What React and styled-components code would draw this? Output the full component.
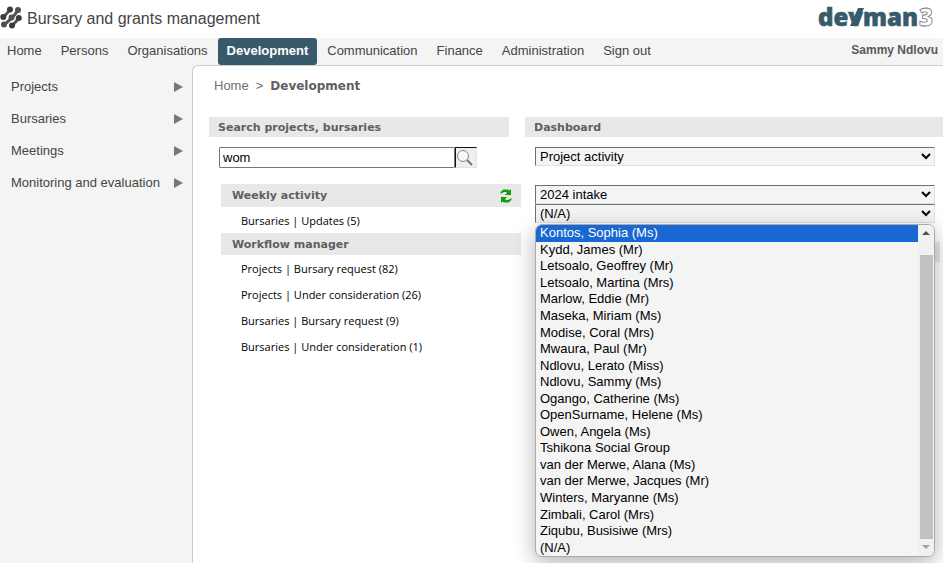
import React from "react";
import styled, { createGlobalStyle } from "styled-components";

const sans = `"Liberation Sans", Arial, sans-serif`;
const wide = `"DejaVu Sans", Verdana, sans-serif`;
const humanist = `"Open Sans", "Noto Sans", sans-serif`;

const GlobalStyle = createGlobalStyle`
  *, *::before, *::after { box-sizing: border-box; }
  body { margin: 0; background: #fff; color: #444; font: 13px/16px ${sans}; }
  a { color: inherit; text-decoration: none; }
  ul { list-style: none; margin: 0; padding: 0; }
`;

const Page = styled.div`
  display: flex;
  flex-direction: column;
  min-height: 100vh;
`;

const Header = styled.header`
  display: flex;
  align-items: center;
  justify-content: space-between;
  height: 38px;
  padding-right: 8px;
`;

const Brand = styled.div`
  display: flex;
  align-items: center;
  gap: 5px;
`;

const Title = styled.h1`
  margin: 0;
  font-size: 16px;
  font-weight: 400;
  line-height: 20px;
`;

const NavBar = styled.nav`
  display: flex;
  align-items: flex-start;
  justify-content: space-between;
  height: 27px;
  padding-right: 5px;
  background: #f4f4f4;
`;

const Tabs = styled.ul`
  display: flex;
  gap: 1px;
  padding-left: 7px;
`;

const Tab = styled.a`
  display: block;
  padding: 0 9px;
  line-height: 26px;
  height: 27px;
  border-radius: 3px;
  font-weight: ${(p) => (p.$active ? 700 : 400)};
  color: ${(p) => (p.$active ? "#fff" : "#444")};
  background: ${(p) => (p.$active ? "#375b6b" : "transparent")};
  li:first-child > & { padding-left: 0; }
`;

const UserName = styled.a`
  font-size: 12px;
  font-weight: 700;
  line-height: 24px;
  color: #5a5a5a;
`;

const Body = styled.div`
  display: grid;
  grid-template-columns: 192px 1fr;
  flex: 1;
  background: #f4f4f4;
`;

const SideMenu = styled.ul`
  padding: 6px 9px 0 11px;
`;

const SideLink = styled.a`
  display: flex;
  align-items: center;
  justify-content: space-between;
  height: 32px;
`;

const Main = styled.main`
  padding: 12px 0 0 16px;
  background: #fff;
  border: 1px solid #ccc;
  border-width: 1px 0 0 1px;
  border-top-left-radius: 6px;
`;

const Crumbs = styled.nav`
  display: flex;
  gap: 7px;
  padding-left: 5px;
  color: #707070;
  strong { font: 700 12px/16px ${wide}; color: #5f5f5f; }
`;

const Columns = styled.div`
  display: grid;
  grid-template-columns: 300px 1fr;
  gap: 16px;
  margin-top: 23px;
`;

const Bar = styled.h2`
  display: flex;
  align-items: center;
  justify-content: space-between;
  height: ${(p) => p.$height || 20}px;
  margin: 0;
  padding: 1px 9px 0;
  background: #e8e8e8;
  color: #5f5f5f;
  font: 700 11px/16px ${wide};
`;

const SearchForm = styled.form`
  display: flex;
  margin: 10px 32px 0 10px;
`;

const SearchInput = styled.input`
  flex: 1;
  min-width: 0;
  height: 21px;
  padding: 0 3px;
  border: 1px solid #767676;
  border-radius: 1px;
  font: 13px/16px ${sans};
  color: #000;
`;

const SearchButton = styled.button`
  width: 22px;
  height: 21px;
  padding: 0;
  border: 1px solid #e4e4e4;
  border-top-color: #111;
  border-left: 1px solid #111;
  background: #efefef;
  svg { display: block; }
`;

const Tasks = styled.div`
  width: 100%;
  margin: 16px 0 0 12px;
`;

const TaskBar = styled(Bar)`
  padding: 1px 9px 0 11px;
`;

const RefreshButton = styled.button`
  display: flex;
  padding: 0;
  border: 0;
  background: none;
`;

const TaskLink = styled.a`
  display: block;
  padding: 2px 0 0 20px;
  color: #000;
  font: 11px/24px ${humanist};
`;

const Dashboard = styled.section`
  min-width: 0;
`;

const Fields = styled.div`
  position: relative;
  display: flex;
  flex-direction: column;
  margin: 10px 8px 0 10px;
`;

const Dropdown = styled.select`
  width: 100%;
  height: 19px;
  margin-bottom: ${(p) => (p.$spaced ? 19 : 0)}px;
  padding: 0;
  border: 1px solid #e0e0e0;
  border-top-color: #707070;
  border-left-color: #707070;
  border-radius: 0;
  background-color: #f4f4f4;
  color: #000;
  font: 13px/16px ${sans};
`;

const HiddenBehind = styled(Bar)`
  margin: 19px 3px 0 10px;
`;

const Popup = styled.div`
  position: absolute;
  top: 100%;
  left: 0;
  right: 0;
  z-index: 1;
  display: flex;
  margin-top: 1px;
  height: 333px;
  overflow: hidden;
  border: 1px solid #aaa;
  border-radius: 7px;
  background: #f4f4f4;
  box-shadow: 0 6px 22px rgba(0, 0, 0, 0.3);
`;

const Options = styled.ul`
  display: flex;
  flex: 1;
  flex-direction: column;
`;

const Option = styled.li`
  display: flex;
  flex: 1;
  align-items: center;
  padding-left: 4px;
  color: ${(p) => (p.$selected ? "#fff" : "#000")};
  background: ${(p) => (p.$selected ? "#1967d2" : "transparent")};
`;

const ScrollTrack = styled.div`
  display: flex;
  flex-direction: column;
  align-items: center;
  width: 16px;
  padding: 6px 0;
  background: #f1f1f1;
`;

const ScrollThumb = styled.div`
  flex: 1;
  width: 13px;
  margin: 19px 0 6px;
  background: #c1c1c1;
`;

const tabs = [
  "Home", "Persons", "Organisations", "Development",
  "Communication", "Finance", "Administration", "Sign out",
];
const sections = ["Projects", "Bursaries", "Meetings", "Monitoring and evaluation"];
const workflow = [
  "Projects | Bursary request (82)",
  "Projects | Under consideration (26)",
  "Bursaries | Bursary request (9)",
  "Bursaries | Under consideration (1)",
];
const people = [
  "Kontos, Sophia (Ms)", "Kydd, James (Mr)", "Letsoalo, Geoffrey (Mr)",
  "Letsoalo, Martina (Mrs)", "Marlow, Eddie (Mr)", "Maseka, Miriam (Ms)",
  "Modise, Coral (Mrs)", "Mwaura, Paul (Mr)", "Ndlovu, Lerato (Miss)",
  "Ndlovu, Sammy (Ms)", "Ogango, Catherine (Ms)", "OpenSurname, Helene (Ms)",
  "Owen, Angela (Ms)", "Tshikona Social Group", "van der Merwe, Alana (Ms)",
  "van der Merwe, Jacques (Mr)", "Winters, Maryanne (Ms)",
  "Zimbali, Carol (Mrs)", "Ziqubu, Busisiwe (Mrs)", "(N/A)",
];

const DotsIcon = () => (
  <svg width="22" height="26" viewBox="0 0 22 26" fill="#3c3c3c" aria-hidden="true">
    <path
      d="M10 4 3.500 11M18 4.500 12 12 4.500 18.500M19 12 12.500 19.500"
      fill="none" stroke="#555" strokeWidth="3"
    />
    <circle cx="10" cy="3.500" r="3" />
    <circle cx="18" cy="4" r="3" fill="#505050" />
    <circle cx="3.300" cy="11" r="3" />
    <circle cx="11.500" cy="11.500" r="3" fill="#505050" />
    <circle cx="18.800" cy="12" r="3" />
    <circle cx="4" cy="18.500" r="3" fill="#505050" />
    <circle cx="12" cy="19.500" r="3" />
  </svg>
);

const Logo = () => (
  <svg width="117" height="38" viewBox="0 0 117 38" role="img" aria-label="devman3">
    <g fontFamily="Open Sans" fontSize="24" fontWeight="800" fill="#375b6b">
      <text x="0" y="26" stroke="#375b6b" strokeWidth="0.600">devman</text>
      <path d="M32 26 40 8H46L38 26Z" />
      <text x="101" y="26" fill="#fff" stroke="#777" strokeWidth="0.800">3</text>
    </g>
  </svg>
);

const Triangle = () => (
  <svg width="10" height="10" viewBox="0 0 10 10" aria-hidden="true">
    <path d="M1 0 10 5 1 10Z" fill="#74777b" />
  </svg>
);

const SearchIcon = () => (
  <svg width="20" height="19" viewBox="0 0 20 19" fill="none" aria-hidden="true">
    <circle cx="7" cy="8" r="5.500" fill="#f8f8f8" stroke="#888" />
    <path d="M4 8a3.500 3.500 0 0 1 3-4" stroke="#fff" strokeWidth="1.500" />
    <path d="m11 12 5 5" stroke="#777" strokeWidth="2" />
  </svg>
);

const RefreshIcon = () => (
  <svg width="12" height="14" viewBox="0 0 12 14" fill="#0aa10a" aria-hidden="true">
    <path d="M0 5 1 2.500 3.500 .500H8L9.500 1.500 11 0V6H5L7 4 6 3H4Z" />
    <path d="M12 9 11 11.500 8.500 13.500H4L2.500 12.500 1 14V8H7L5 10 6 11H8Z" />
  </svg>
);

const ScrollArrow = ({ down }) => (
  <svg width="8" height="5" viewBox="0 0 8 5" aria-hidden="true">
    <path d={down ? "M0 0H8L4 4Z" : "M4 0 8 4H0Z"} fill={down ? "#a3a3a3" : "#505050"} />
  </svg>
);

export default function App() {
  return (
    <Page>
      <GlobalStyle />
      <Header>
        <Brand>
          <DotsIcon />
          <Title>Bursary and grants management</Title>
        </Brand>
        <Logo />
      </Header>
      <NavBar aria-label="Main">
        <Tabs>
          {tabs.map((name) => (
            <li key={name}>
              <Tab href="#" $active={name === "Development"}>{name}</Tab>
            </li>
          ))}
        </Tabs>
        <UserName href="#">Sammy Ndlovu</UserName>
      </NavBar>
      <Body>
        <SideMenu>
          {sections.map((name) => (
            <li key={name}>
              <SideLink href="#">{name}<Triangle /></SideLink>
            </li>
          ))}
        </SideMenu>
        <Main>
          <Crumbs aria-label="Breadcrumb">
            <a href="#">Home</a>
            <span>&gt;</span>
            <strong>Development</strong>
          </Crumbs>
          <Columns>
            <section>
              <Bar as="label" htmlFor="search">Search projects, bursaries</Bar>
              <SearchForm>
                <SearchInput id="search" defaultValue="wom" />
                <SearchButton type="button" aria-label="Search"><SearchIcon /></SearchButton>
              </SearchForm>
              <Tasks>
                <TaskBar $height={23}>
                  Weekly activity
                  <RefreshButton type="button" aria-label="Refresh"><RefreshIcon /></RefreshButton>
                </TaskBar>
                <TaskLink href="#">Bursaries | Updates (5)</TaskLink>
                <TaskBar $height={22}>Workflow manager</TaskBar>
                {workflow.map((name) => <TaskLink href="#" key={name}>{name}</TaskLink>)}
              </Tasks>
            </section>
            <Dashboard>
              <Bar>Dashboard</Bar>
              <Fields>
                <Dropdown $spaced aria-label="View"><option>Project activity</option></Dropdown>
                <Dropdown aria-label="Intake"><option>2024 intake</option></Dropdown>
                <Dropdown aria-label="Person"><option>(N/A)</option></Dropdown>
                <Popup>
                  <Options role="listbox" aria-label="Person">
                    {people.map((name, i) => (
                      <Option key={name} role="option" aria-selected={i === 0} $selected={i === 0}>
                        {name}
                      </Option>
                    ))}
                  </Options>
                  <ScrollTrack>
                    <ScrollArrow />
                    <ScrollThumb />
                    <ScrollArrow down />
                  </ScrollTrack>
                </Popup>
              </Fields>
              <HiddenBehind as="div" />
            </Dashboard>
          </Columns>
        </Main>
      </Body>
    </Page>
  );
}
